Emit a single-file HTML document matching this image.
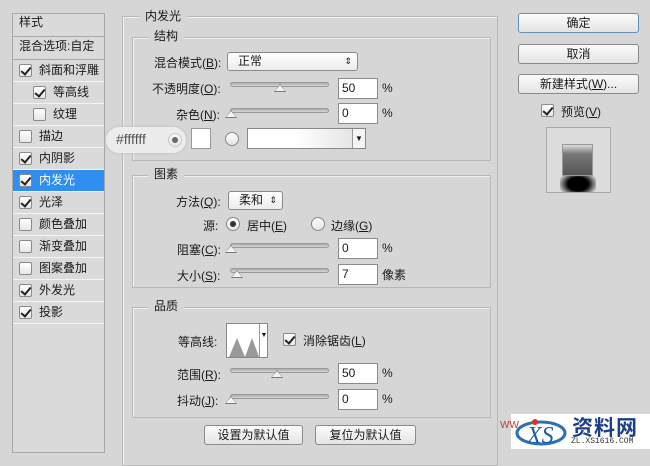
<!DOCTYPE html>
<html><head><meta charset="utf-8"><style>
*{box-sizing:border-box;margin:0;padding:0}
body{width:650px;height:449px;background:#d6d6d6;font-family:"Liberation Sans","Noto Sans CJK SC",sans-serif;font-size:12px;color:#1a1a1a;position:relative;overflow:hidden}
.a{position:absolute;white-space:nowrap}
.lp{position:absolute;left:12px;top:13px;width:93px;height:440px;border:1px solid #a8a8a8;background:#dadada}
.row{position:absolute;left:0;width:91px;height:22px;border-bottom:1px solid #f4f4f4;line-height:21px}
.cb{position:absolute;width:13px;height:13px;border:1px solid #8a8a8a;background:linear-gradient(#fff,#e6e6e6);border-radius:2px}
.cb.on::after{content:"";position:absolute;left:3px;top:0px;width:4px;height:8px;border:solid #222;border-width:0 2px 2px 0;transform:rotate(40deg)}
.fs{position:absolute;border:1px solid #b8b8b8;box-shadow:1px 1px 0 #f0f0f0 inset}
.lg{position:absolute;background:#d6d6d6;padding:0 6px;line-height:14px}
.inp{position:absolute;height:21px;width:40px;background:#fff;border:1px solid #8c8c8c;padding-left:3px;line-height:19px}
.sl{position:absolute;height:5px;border:1px solid #999;border-radius:3px;background:linear-gradient(#aaa,#d8d8d8)}
.th{position:absolute;width:0;height:0;border-left:6px solid transparent;border-right:6px solid transparent;border-bottom:8px solid #777}
.th::after{content:"";position:absolute;left:-5px;top:1px;border-left:5px solid transparent;border-right:5px solid transparent;border-bottom:6px solid #f4f4f4}
.btn{position:absolute;height:20px;border:1px solid #8a8a8a;border-radius:3px;background:linear-gradient(#fbfbfb,#e4e4e4);text-align:center;line-height:18px;font-size:12px}
.sel{position:absolute;height:19px;border:1px solid #8a8a8a;border-radius:3px;background:linear-gradient(#fff,#ececec);line-height:17px;padding-left:10px}
.rd{position:absolute;width:14px;height:14px;border:1px solid #888;border-radius:50%;background:linear-gradient(#fff,#e4e4e4)}
.rd.on::after{content:"";position:absolute;left:3px;top:3px;width:6px;height:6px;border-radius:50%;background:#333}
u{text-decoration:underline}
</style></head><body>

<div class="lp">
 <div class="row" style="top:0;height:23px;border-bottom:1px solid #a8a8a8;padding-left:6px;line-height:16px">样式</div>
 <div class="row" style="top:23px;height:23px;border-bottom:1px solid #a8a8a8;padding-left:6px;line-height:18px">混合选项:自定</div>
 <div class="row" style="top:46px"><div class="cb on" style="left:6px;top:4px"></div><span class="a" style="left:26px">斜面和浮雕</span></div>
 <div class="row" style="top:68px"><div class="cb on" style="left:20px;top:4px"></div><span class="a" style="left:40px">等高线</span></div>
 <div class="row" style="top:90px"><div class="cb" style="left:20px;top:4px"></div><span class="a" style="left:40px">纹理</span></div>
 <div class="row" style="top:112px"><div class="cb" style="left:6px;top:4px"></div><span class="a" style="left:26px">描边</span></div>
 <div class="row" style="top:134px"><div class="cb on" style="left:6px;top:4px"></div><span class="a" style="left:26px">内阴影</span></div>
 <div class="row" style="top:156px;background:#2f8ef0;color:#fff"><div class="cb on" style="left:6px;top:4px"></div><span class="a" style="left:26px">内发光</span></div>
 <div class="row" style="top:178px"><div class="cb on" style="left:6px;top:4px"></div><span class="a" style="left:26px">光泽</span></div>
 <div class="row" style="top:200px"><div class="cb" style="left:6px;top:4px"></div><span class="a" style="left:26px">颜色叠加</span></div>
 <div class="row" style="top:222px"><div class="cb" style="left:6px;top:4px"></div><span class="a" style="left:26px">渐变叠加</span></div>
 <div class="row" style="top:244px"><div class="cb" style="left:6px;top:4px"></div><span class="a" style="left:26px">图案叠加</span></div>
 <div class="row" style="top:266px"><div class="cb on" style="left:6px;top:4px"></div><span class="a" style="left:26px">外发光</span></div>
 <div class="row" style="top:288px"><div class="cb on" style="left:6px;top:4px"></div><span class="a" style="left:26px">投影</span></div>
</div>

<!-- outer -->
<div class="fs" style="left:122px;top:16px;width:376px;height:450px"></div>
<div class="lg" style="left:139px;top:9px">内发光</div>

<!-- 结构 -->
<div class="fs" style="left:132px;top:37px;width:359px;height:124px"></div>
<div class="lg" style="left:148px;top:29px">结构</div>
<span class="a" style="left:154px;top:54px">混合模式(<u>B</u>):</span>
<div class="sel" style="left:227px;top:52px;width:131px">正常<span class="a" style="right:5px;top:0;font-size:9px">&#8661;</span></div>
<span class="a" style="left:152px;top:80px">不透明度(<u>O</u>):</span>
<div class="sl" style="left:230px;top:82px;width:99px"></div><div class="th" style="left:274px;top:84px"></div>
<div class="inp" style="left:338px;top:78px">50</div><span class="a" style="left:382px;top:81px">%</span>
<span class="a" style="left:176px;top:106px">杂色(<u>N</u>):</span>
<div class="sl" style="left:230px;top:108px;width:99px"></div><div class="th" style="left:225px;top:110px"></div>
<div class="inp" style="left:338px;top:103px">0</div><span class="a" style="left:382px;top:106px">%</span>
<div class="a" style="left:106px;top:127px;width:80px;height:26px;border-radius:13px;background:#ececec;box-shadow:0 0 3px #bbb"></div>
<span class="a" style="left:116px;top:131px;font-size:14px;color:#555">#ffffff</span>
<div class="rd on" style="left:168px;top:133px;border-color:#bbb;opacity:.7"></div>
<div class="a" style="left:191px;top:128px;width:20px;height:21px;background:#fff;border:1px solid #999"></div>
<div class="rd" style="left:225px;top:132px"></div>
<div class="a" style="left:247px;top:128px;width:119px;height:21px;border:1px solid #888;background:linear-gradient(90deg,#fff 40%,#e0e0e0);"></div>
<div class="a" style="left:352px;top:129px;width:13px;height:19px;border-left:1px solid #999;background:#f4f4f4;font-size:8px;text-align:center;line-height:19px">&#9660;</div>

<!-- 图素 -->
<div class="fs" style="left:132px;top:175px;width:359px;height:113px"></div>
<div class="lg" style="left:148px;top:167px">图素</div>
<span class="a" style="left:176px;top:193px">方法(<u>Q</u>):</span>
<div class="sel" style="left:228px;top:191px;width:55px">柔和<span class="a" style="right:5px;top:0;font-size:9px">&#8661;</span></div>
<span class="a" style="left:203px;top:217px">源:</span>
<div class="rd on" style="left:226px;top:217px"></div><span class="a" style="left:247px;top:217px">居中(<u>E</u>)</span>
<div class="rd" style="left:311px;top:217px"></div><span class="a" style="left:331px;top:217px">边缘(<u>G</u>)</span>
<span class="a" style="left:177px;top:241px">阻塞(<u>C</u>):</span>
<div class="sl" style="left:230px;top:243px;width:99px"></div><div class="th" style="left:225px;top:245px"></div>
<div class="inp" style="left:338px;top:238px">0</div><span class="a" style="left:382px;top:241px">%</span>
<span class="a" style="left:177px;top:267px">大小(<u>S</u>):</span>
<div class="sl" style="left:230px;top:268px;width:99px"></div><div class="th" style="left:231px;top:270px"></div>
<div class="inp" style="left:338px;top:264px">7</div><span class="a" style="left:382px;top:266px">像素</span>

<!-- 品质 -->
<div class="fs" style="left:132px;top:307px;width:359px;height:111px"></div>
<div class="lg" style="left:148px;top:299px">品质</div>
<span class="a" style="left:178px;top:333px">等高线:</span>
<div class="a" style="left:226px;top:323px;width:42px;height:35px;border:1px solid #888;background:#fff;overflow:hidden">
 <svg width="32" height="33" style="position:absolute;left:0;top:0"><path d="M2 33 L10 14 L18 33 L25 14 L32 33Z" fill="#999"/></svg>
 <div class="a" style="left:32px;top:0;width:9px;height:33px;border-left:1px solid #999;font-size:7px;text-align:center;line-height:24px">&#9660;</div>
</div>
<div class="cb on" style="left:283px;top:333px"></div>
<span class="a" style="left:303px;top:332px">消除锯齿(<u>L</u>)</span>
<span class="a" style="left:177px;top:366px">范围(<u>R</u>):</span>
<div class="sl" style="left:230px;top:368px;width:99px"></div><div class="th" style="left:271px;top:370px"></div>
<div class="inp" style="left:338px;top:363px">50</div><span class="a" style="left:382px;top:366px">%</span>
<span class="a" style="left:177px;top:392px">抖动(<u>J</u>):</span>
<div class="sl" style="left:230px;top:394px;width:99px"></div><div class="th" style="left:225px;top:396px"></div>
<div class="inp" style="left:338px;top:389px">0</div><span class="a" style="left:382px;top:392px">%</span>

<div class="btn" style="left:204px;top:425px;width:99px">设置为默认值</div>
<div class="btn" style="left:315px;top:425px;width:101px">复位为默认值</div>

<!-- right -->
<div class="btn" style="left:518px;top:13px;width:121px;border-color:#6a8fb5">确定</div>
<div class="btn" style="left:518px;top:44px;width:121px">取消</div>
<div class="btn" style="left:518px;top:74px;width:121px">新建样式(<u>W</u>)...</div>
<div class="cb on" style="left:541px;top:104px"></div>
<span class="a" style="left:561px;top:103px">预览(<u>V</u>)</span>
<div class="a" style="left:546px;top:127px;width:65px;height:66px;border:1px solid #aaa;background:#dcdcdc"></div>
<div class="a" style="left:560px;top:172px;width:36px;height:20px;background:radial-gradient(ellipse at 50% 60%,#000 40%,rgba(0,0,0,0) 80%)"></div>
<div class="a" style="left:562px;top:144px;width:31px;height:32px;background:linear-gradient(#ddd,#777 30%,#555);border:1px solid #999"></div>

<!-- watermark -->
<div class="a" style="left:511px;top:414px;width:139px;height:35px;background:#fff"></div>
<svg class="a" style="left:513px;top:413px" width="60" height="36"><ellipse cx="28" cy="20" rx="24" ry="11" fill="none" stroke="#2d6fb5" stroke-width="3"/><text x="14" y="30" font-family="Liberation Serif" font-style="italic" font-size="24" fill="#1b5fa8">XS</text><circle cx="22" cy="9" r="3" fill="#e03020"/></svg>
<span class="a" style="left:572px;top:412px;font-size:21px;font-weight:bold;color:#1b3f8a;letter-spacing:1px">资料网</span>
<span class="a" style="left:571px;top:437px;font-size:8px;font-family:'Liberation Mono',monospace;color:#333">ZL.XS1616.COM</span>
<span class="a" style="left:500px;top:420px;font-size:10px;color:#c33">WW</span>
</body></html>
